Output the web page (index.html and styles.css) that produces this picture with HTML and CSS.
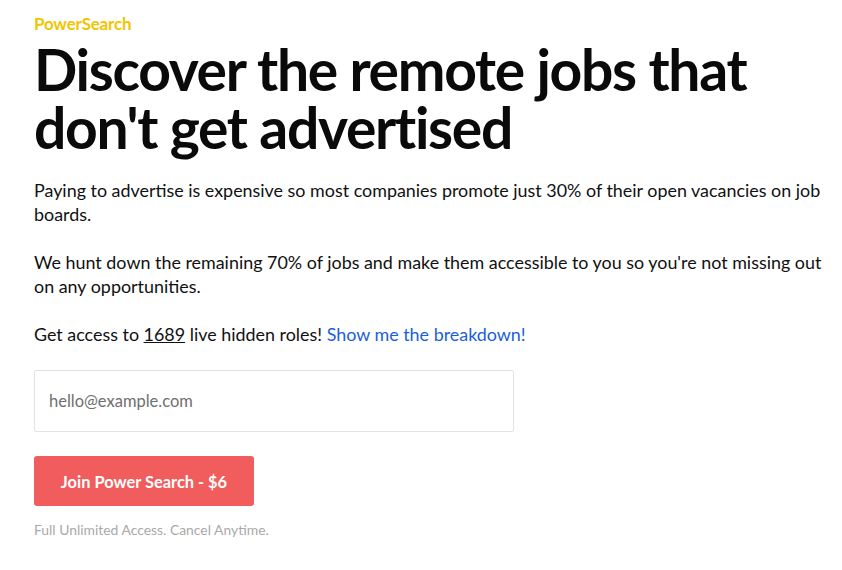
FILE: index.html
```html
<!DOCTYPE html>
<html lang="en">
<head>
<meta charset="utf-8">
<title>PowerSearch</title>
<link rel="stylesheet" href="styles.css">
</head>
<body>
<main class="page">
  <div class="brand">PowerSearch</div>
  <h1 class="title">Discover the remote jobs that don't get advertised</h1>
  <p class="copy">Paying to advertise is expensive so most companies promote just 30% of their open vacancies on job boards.</p>
  <p class="copy">We hunt down the remaining 70% of jobs and make them accessible to you so you're not missing out on any opportunities.</p>
  <p class="copy">Get access to <span class="count">1689</span> live hidden roles! <a class="link" href="#">Show me the breakdown!</a></p>
  <form class="signup">
    <input class="email" type="email" placeholder="hello@example.com">
    <button class="join" type="button">Join Power Search - $6</button>
    <div class="note">Full Unlimited Access. Cancel Anytime.</div>
  </form>
</main>
</body>
</html>
```

FILE: styles.css
```css
html, body {
  margin: 0;
  padding: 0;
  background: #ffffff;
}

body {
  font-family: "Lato", "Open Sans", sans-serif;
  color: #111111;
}

.page {
  padding: 14px 0 0 34px;
  width: 789px;
}

.brand {
  color: #f2c500;
  font-size: 17px;
  font-weight: 700;
  line-height: 20px;
  letter-spacing: -0.2px;
}

.title {
  margin: 6px 0 22px;
  font-size: 57px;
  font-weight: 700;
  line-height: 58px;
  letter-spacing: -1.3px;
  color: #0a0a0a;
}

.copy {
  margin: 0 0 24px;
  font-size: 17.9px;
  line-height: 24px;
}

.count {
  text-decoration: underline;
}

.link {
  color: #1a5fd9;
  text-decoration: none;
}

.signup {
  display: flex;
  flex-direction: column;
  align-items: flex-start;
  margin-top: 11px;
}

.email {
  box-sizing: border-box;
  width: 480px;
  height: 62px;
  padding: 0 14px;
  border: 1px solid #e2e2e2;
  border-radius: 2px;
  font-family: inherit;
  font-size: 16.5px;
  color: #333;
  outline: none;
}

.email::placeholder {
  color: #6f6f6f;
}

.join {
  margin-top: 24px;
  width: 220px;
  height: 50px;
  border: none;
  border-radius: 3px;
  background: #f05d5c;
  color: #ffffff;
  font-family: inherit;
  font-size: 16.4px;
  font-weight: 700;
}

.note {
  margin-top: 15px;
  font-size: 13.9px;
  color: #a9a9a9;
}
```
